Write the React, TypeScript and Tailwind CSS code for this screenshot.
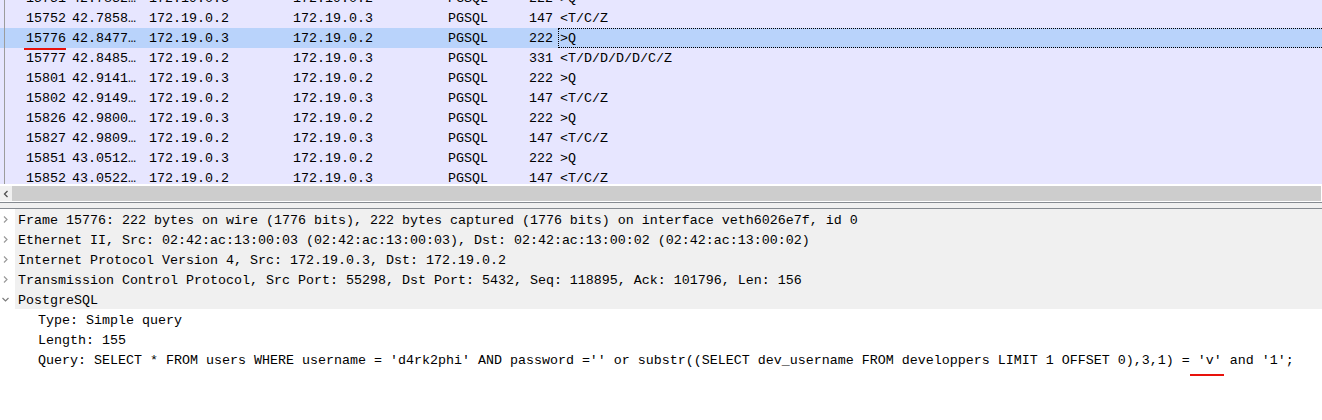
import React from "react";

interface Packet {
  no: string;
  time: string;
  src: string;
  dst: string;
  proto: string;
  len: string;
  info: string;
}

const packets: Packet[] = [
  { no: "15751", time: "42.7832…", src: "172.19.0.3", dst: "172.19.0.2", proto: "PGSQL", len: "222", info: ">Q" },
  { no: "15752", time: "42.7858…", src: "172.19.0.2", dst: "172.19.0.3", proto: "PGSQL", len: "147", info: "<T/C/Z" },
  { no: "15776", time: "42.8477…", src: "172.19.0.3", dst: "172.19.0.2", proto: "PGSQL", len: "222", info: ">Q" },
  { no: "15777", time: "42.8485…", src: "172.19.0.2", dst: "172.19.0.3", proto: "PGSQL", len: "331", info: "<T/D/D/D/D/C/Z" },
  { no: "15801", time: "42.9141…", src: "172.19.0.3", dst: "172.19.0.2", proto: "PGSQL", len: "222", info: ">Q" },
  { no: "15802", time: "42.9149…", src: "172.19.0.2", dst: "172.19.0.3", proto: "PGSQL", len: "147", info: "<T/C/Z" },
  { no: "15826", time: "42.9800…", src: "172.19.0.3", dst: "172.19.0.2", proto: "PGSQL", len: "222", info: ">Q" },
  { no: "15827", time: "42.9809…", src: "172.19.0.2", dst: "172.19.0.3", proto: "PGSQL", len: "147", info: "<T/C/Z" },
  { no: "15851", time: "43.0512…", src: "172.19.0.3", dst: "172.19.0.2", proto: "PGSQL", len: "222", info: ">Q" },
  { no: "15852", time: "43.0522…", src: "172.19.0.2", dst: "172.19.0.3", proto: "PGSQL", len: "147", info: "<T/C/Z" },
];

const SELECTED = "15776";

const topItems = [
  "Frame 15776: 222 bytes on wire (1776 bits), 222 bytes captured (1776 bits) on interface veth6026e7f, id 0",
  "Ethernet II, Src: 02:42:ac:13:00:03 (02:42:ac:13:00:03), Dst: 02:42:ac:13:00:02 (02:42:ac:13:00:02)",
  "Internet Protocol Version 4, Src: 172.19.0.3, Dst: 172.19.0.2",
  "Transmission Control Protocol, Src Port: 55298, Dst Port: 5432, Seq: 118895, Ack: 101796, Len: 156",
];

function Chevron({ open }: { open?: boolean }) {
  return (
    <svg width="15" height="20" viewBox="0 0 15 20" className="shrink-0">
      {open ? (
        <path d="M2.5 9 L5.5 12 L8.5 9" fill="none" stroke="#7d7d7d" strokeWidth="1.2" />
      ) : (
        <path d="M4 7.5 L7 10.5 L4 13.5" fill="none" stroke="#9a9a9a" strokeWidth="1.2" />
      )}
    </svg>
  );
}

function PacketRow({ p }: { p: Packet }) {
  const sel = p.no === SELECTED;
  const cell = "h-full pt-[2px] leading-[18px] shrink-0";
  return (
    <div className={`flex h-[20px] whitespace-nowrap ${sel ? "bg-[#b9d3fb]" : ""}`}>
      <div className="w-[5px] h-full border-r border-[#9c9c9c] shrink-0" />
      <div className={`relative w-[63px] pr-[2px] text-right ${cell}`}>
        {p.no}
        {sel && <span className="absolute right-[2px] w-[42px] top-[20px] h-[2px] bg-[#e8120c]" />}
      </div>
      <div className={`w-[81px] pl-[4px] ${cell}`}>{p.time}</div>
      <div className={`w-[144px] ${cell}`}>{p.src}</div>
      <div className={`w-[155px] ${cell}`}>{p.dst}</div>
      <div className={`w-[70px] ${cell}`}>{p.proto}</div>
      <div className={`w-[40px] pr-[5px] text-right ${cell}`}>{p.len}</div>
      <div
        className={`flex-1 h-full pl-[1px] pt-[2px] border border-r-0 leading-[16px] ${
          sel ? "border-dotted border-black" : "border-transparent"
        }`}
      >
        {p.info}
      </div>
    </div>
  );
}

export default function App() {
  return (
    <div
      className="w-[1322px] h-[420px] overflow-hidden bg-white text-black text-[13.33px]"
      style={{ fontFamily: '"Liberation Mono", monospace' }}
    >
      {/* packet list */}
      <div className="h-[184px] overflow-hidden bg-[#e7e6ff]">
        <div className="-mt-[12px]">
          {packets.map((p) => (
            <PacketRow key={p.no} p={p} />
          ))}
        </div>
      </div>

      {/* horizontal scrollbar */}
      <div className="h-[2px] bg-white" />
      <div className="flex h-[15px]">
        <div className="w-[12px] bg-[#f0f0f0] flex items-center justify-center">
          <svg width="8" height="10" viewBox="0 0 8 10">
            <path d="M5.5 2 L2.5 5 L5.5 8" fill="none" stroke="#505050" strokeWidth="1.3" />
          </svg>
        </div>
        <div className="flex-1 bg-[#cdcdcd] border-r border-white" />
      </div>

      {/* splitter */}
      <div className="h-[1px] bg-white" />
      <div className="h-[7px] bg-[#f0f0f0] border-t border-b border-[#858a90]" />

      {/* packet details */}
      <div className="whitespace-nowrap">
        {topItems.map((t) => (
          <div key={t} className="flex h-[20px]">
            <Chevron />
            <div className="flex-1 bg-[#f0f0f0] pl-[3px] pt-[4px] leading-[16px]">{t}</div>
          </div>
        ))}
        <div className="flex h-[20px]">
          <Chevron open />
          <div className="flex-1 bg-[#f0f0f0] pl-[3px] pt-[4px] leading-[16px]">PostgreSQL</div>
        </div>
        <div className="h-[20px] pl-[38px] pt-[4px] leading-[16px]">Type: Simple query</div>
        <div className="h-[20px] pl-[38px] pt-[4px] leading-[16px]">Length: 155</div>
        <div className="relative h-[20px] pl-[38px] pt-[4px] leading-[16px]">
          Query: SELECT * FROM users WHERE username = 'd4rk2phi' AND password ='' or substr((SELECT dev_username
          FROM developpers LIMIT 1 OFFSET 0),3,1) = 'v' and '1';
          <span className="absolute left-[1190px] w-[34px] top-[25px] h-[2px] bg-[#e8120c]" />
        </div>
      </div>
    </div>
  );
}
